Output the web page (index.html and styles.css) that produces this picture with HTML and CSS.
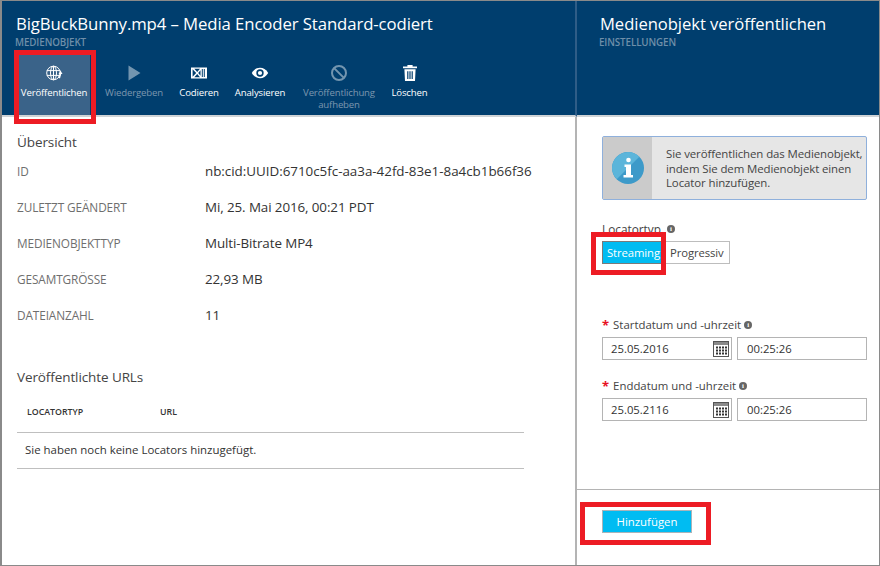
FILE: index.html
```html
<!DOCTYPE html>
<html lang="de">
<head>
<meta charset="utf-8">
<title>Medienobjekt veröffentlichen</title>
<link rel="stylesheet" href="styles.css">
</head>
<body>
<div class="frame">
  <section class="blade left">
    <header class="head left-head">
      <h1 class="title">BigBuckBunny.mp4 – Media Encoder Standard-codiert</h1>
      <div class="sub">MEDIENOBJEKT</div>
      <nav class="cmds">
        <div class="cmd active w72">
          <svg class="ico" viewBox="0 0 18 18"><g fill="none" stroke="#fff" stroke-width="1"><circle cx="8.500" cy="9" r="6.800"/><ellipse cx="8.500" cy="9" rx="3" ry="6.800"/><path d="M8.500 2.200v13.600M1.900 6.600h13.200M1.900 11.400h13.200"/></g><path d="M15.500 6.500l2 3.500h-1.300l-1.200 4.500-2-1 1.500-3.500h-1z" fill="#fff"/></svg>
          <span>Veröffentlichen</span>
        </div>
        <div class="cmd off w88">
          <svg class="ico" viewBox="0 0 18 18"><path d="M3.500 1.500L15.500 9 3.500 16.500z" fill="#fff"/></svg>
          <span>Wiedergeben</span>
        </div>
        <div class="cmd w42">
          <svg class="ico" viewBox="0 0 18 18"><path fill-rule="evenodd" fill="#fff" d="M1 3.500h16v11H1zM2.600 5.300v7.400L6.200 9zM4.300 4.700L7.200 8 10 4.700zM4.300 13.300L7.200 10 10 13.300zM8.200 9l2.300 2.700V6.300z"/><path d="M11.800 5h1v8h-1zM13.800 5h1v8h-1z" fill="#003e6e"/></svg>
          <span>Codieren</span>
        </div>
        <div class="cmd w80">
          <svg class="ico" viewBox="0 0 18 18"><path d="M.8 9C3 5.400 5.800 3.800 9 3.800s6 1.600 8.200 5.200c-2.200 3.600-5 5.200-8.200 5.200S3 12.600.8 9z" fill="#fff"/><circle cx="9" cy="9" r="3.700" fill="#003e6e"/><circle cx="9" cy="9" r="2.100" fill="#fff"/></svg>
          <span>Analysieren</span>
        </div>
        <div class="cmd off w78">
          <svg class="ico" viewBox="0 0 18 18"><g fill="none" stroke="#fff" stroke-width="2"><circle cx="9" cy="9" r="7"/><path d="M4.100 4.100l9.800 9.800"/></g></svg>
          <span>Veröffentlichung<br>aufheben</span>
        </div>
        <div class="cmd w63">
          <svg class="ico" viewBox="0 0 18 18"><path d="M6.400 1h5.200v1.400H16v1.800H2V2.400h4.400z" fill="#fff"/><path fill-rule="evenodd" d="M3.400 5.200h11.200l-.6 11.800H4zM6.200 7.200v7.800h1.200V7.200zM8.400 7.200v7.800h1.200V7.200zM10.600 7.200v7.800h1.200V7.200z" fill="#fff"/></svg>
          <span>Löschen</span>
        </div>
      </nav>
    </header>
    <main class="left-body">
      <h2 class="section">Übersicht</h2>
      <dl class="props">
        <div class="prop"><dt>ID</dt><dd class="id-val">nb:cid:UUID:6710c5fc-aa3a-42fd-83e1-8a4cb1b66f36</dd></div>
        <div class="prop"><dt>ZULETZT GEÄNDERT</dt><dd>Mi, 25. Mai 2016, 00:21 PDT</dd></div>
        <div class="prop"><dt>MEDIENOBJEKTTYP</dt><dd>Multi-Bitrate MP4</dd></div>
        <div class="prop"><dt>GESAMTGRÖSSE</dt><dd>22,93 MB</dd></div>
        <div class="prop"><dt>DATEIANZAHL</dt><dd>11</dd></div>
      </dl>
      <h2 class="section urls">Veröffentlichte URLs</h2>
      <div class="thead"><span class="th-type">LOCATORTYP</span><span>URL</span></div>
      <div class="empty">Sie haben noch keine Locators hinzugefügt.</div>
    </main>
  </section>
  <section class="blade right">
    <header class="head right-head">
      <h1 class="title small">Medienobjekt veröffentlichen</h1>
      <div class="sub">EINSTELLUNGEN</div>
    </header>
    <div class="right-body">
      <div class="info">
        <div class="info-icon">
          <svg viewBox="0 0 32 32" width="32" height="32"><circle cx="16" cy="16" r="16" fill="#3d9ac9"/><path d="M16 0a16 16 0 0 0-11.300 27.300L27.300 4.700A16 16 0 0 0 16 0z" fill="#5cb5da"/><circle cx="16.500" cy="8" r="2.300" fill="#fff"/><path d="M12.500 12.500h6.500V23h2v2.500H11.500V23h2.500v-8h-1.500z" fill="#fff"/></svg>
        </div>
        <p class="info-text">Sie veröffentlichen das Medienobjekt, indem Sie dem Medienobjekt einen Locator hinzufügen.</p>
      </div>
      <div class="label loc">Locatortyp <i class="tip">i</i></div>
      <div class="toggle"><span class="opt on">Streaming</span><span class="opt">Progressiv</span></div>
      <div class="label start"><b class="req">*</b> Startdatum und -uhrzeit <i class="tip">i</i></div>
      <div class="dt">
        <div class="field date"><span>25.05.2016</span>
          <svg class="cal" viewBox="0 0 16 16"><rect x=".5" y=".5" width="15" height="15" fill="#fff" stroke="#555"/><rect x="1" y="1" width="14" height="3" fill="#8a8a8a"/><path d="M3 5.500h2v2H3zM6 5.500h2v2H6zM9 5.500h2v2H9zM12 5.500h2v2h-2zM3 8.500h2v2H3zM6 8.500h2v2H6zM9 8.500h2v2H9zM12 8.500h2v2h-2zM3 11.500h2v2H3zM6 11.500h2v2H6zM9 11.500h2v2H9zM12 11.500h2v2h-2z" fill="#333"/></svg>
        </div>
        <div class="field time">00:25:26</div>
      </div>
      <div class="label end"><b class="req">*</b> Enddatum und -uhrzeit <i class="tip">i</i></div>
      <div class="dt">
        <div class="field date"><span>25.05.2116</span>
          <svg class="cal" viewBox="0 0 16 16"><rect x=".5" y=".5" width="15" height="15" fill="#fff" stroke="#555"/><rect x="1" y="1" width="14" height="3" fill="#8a8a8a"/><path d="M3 5.500h2v2H3zM6 5.500h2v2H6zM9 5.500h2v2H9zM12 5.500h2v2h-2zM3 8.500h2v2H3zM6 8.500h2v2H6zM9 8.500h2v2H9zM12 8.500h2v2h-2zM3 11.500h2v2H3zM6 11.500h2v2H6zM9 11.500h2v2H9zM12 11.500h2v2h-2z" fill="#333"/></svg>
        </div>
        <div class="field time">00:25:26</div>
      </div>
    </div>
    <footer class="foot"><button class="add">Hinzufügen</button></footer>
  </section>
  <div class="mark m1"></div>
  <div class="mark m2"></div>
  <div class="mark m3"></div>
</div>
</body>
</html>
```
FILE: styles.css
```css
* { box-sizing: border-box; margin: 0; padding: 0; }
html, body { width: 880px; height: 566px; overflow: hidden; background: #fff; }
body { font-family: "Open Sans", "Noto Sans", sans-serif; color: #333; }
.frame {
  position: relative; width: 880px; height: 566px; display: flex;
  border-top: 1px solid #8a8a8a; border-left: 2px solid #8a8a8a;
  border-bottom: 1px solid #8a8a8a; border-right: 1px solid #8a8a8a;
}
.blade { display: flex; flex-direction: column; height: 100%; }
.left { width: 575px; }
.right { flex: 1; }
.head { height: 116px; background: #003e6e; border-bottom: 2px solid #cfd3d6; color: #fff; flex: none; }
.left-head { padding: 11px 0 0 14px; border-right: 2px solid #2f5d87; }
.right-head { padding: 11px 0 0 22px; }
.title { font-size: 16.750px; font-weight: 400; line-height: 23px; white-space: nowrap; letter-spacing: -0.1px; }
.title.small { font-size: 16.600px; letter-spacing: -0.05px; padding-left: 1px; }
.sub { font-size: 9.800px; font-weight: 600; line-height: 12px; color: #6f8fa9; margin-top: 2px; margin-left: -1px; letter-spacing: -0.1px; }
.right-head .sub { margin-left: 0; }
.cmds { display: flex; margin-top: 2px; margin-left: 2px; height: 64px; }
.cmd { display: flex; flex-direction: column; align-items: center; font-size: 9.600px; line-height: 12px; text-align: center; padding-top: 13px; color: #fff; letter-spacing: -0.15px; font-weight: 500; flex: none; white-space: nowrap; }
.cmd .ico { width: 18px; height: 18px; margin-bottom: 5px; display: block; flex: none; }
.cmd.active { background: #3a6389; }
.cmd.off { color: #7c97ae; }
.cmd.off .ico { opacity: .45; }
.w72 { width: 72px; }
.w88 { width: 88px; }
.w42 { width: 42px; }
.w80 { width: 80px; }
.w78 { width: 78px; }
.w63 { width: 63px; }
.left-body { flex: 1; padding: 16px 0 0 15px; border-right: 2px solid #b4b4b4; }
.section { font-size: 13.500px; font-weight: 400; line-height: 18px; color: #444; letter-spacing: -0.1px; }
.props { margin-top: 12px; }
.prop { display: flex; height: 36px; line-height: 16px; }
.prop dt { width: 188px; font-size: 11.800px; color: #6e6e6e; flex: none; letter-spacing: -0.1px; }
.prop dd { font-size: 13.400px; color: #333; letter-spacing: -0.1px; white-space: nowrap; }
.prop .id-val { letter-spacing: -0.02px; }
.urls { margin-top: 25px; }
.thead { display: flex; margin-top: 20px; padding: 0 0 14px 10px; font-size: 8.800px; font-weight: 600; line-height: 12px; color: #333; border-bottom: 1px solid #bfbfbf; width: 507px; }
.th-type { width: 133px; }
.empty { width: 507px; height: 36px; padding: 9px 0 0 8px; font-size: 11.450px; line-height: 16px; color: #333; border-bottom: 1px solid #bfbfbf; }
.right-body { flex: 1; padding: 19px 0 0 25px; }
.info { display: flex; width: 265px; height: 64px; background: #e6e6e6; border: 1px solid #8fb0dc; border-radius: 2px; }
.info-icon { width: 49px; background: #cbcbcb; display: flex; align-items: center; justify-content: center; flex: none; }
.info-text { padding: 10px 0 0 14px; font-size: 11.450px; line-height: 14.500px; color: #444; letter-spacing: -0.1px; flex: 1; min-width: 0; }
.label { font-size: 11.400px; line-height: 14px; color: #444; display: flex; align-items: center; gap: 3px; white-space: nowrap; }
.loc { margin-top: 22px; gap: 6px; font-size: 11.800px; }
.tip { display: inline-flex; width: 8px; height: 8px; border-radius: 50%; background: #666; color: #fff; font-style: normal; font-size: 7px; line-height: 8px; font-weight: 700; align-items: center; justify-content: center; font-family: "Liberation Serif", serif; }
.toggle { display: flex; margin-top: 5px; height: 23px; }
.opt { border: 1px solid #bdbdbd; font-size: 11.300px; line-height: 21px; width: 68px; padding-left: 7px; color: #444; letter-spacing: -0.1px; }
.opt.on { width: 60px; padding-left: 4px; background: #00bcf2; color: #fff; border: 1px solid #7a7a7a; border-right: 0; }
.start { margin-top: 54px; }
.end { margin-top: 19px; }
.req { color: #e81123; font-size: 13px; font-weight: 700; line-height: 14px; margin-right: 1px; }
.dt { display: flex; gap: 5px; margin-top: 5px; }
.field { height: 23px; border: 1px solid #b4b4b4; font-size: 11.300px; line-height: 21px; color: #333; background: #fff; }
.date { width: 130px; padding: 0 2px 0 8px; display: flex; align-items: center; justify-content: space-between; }
.time { width: 130px; padding-left: 9px; }
.cal { width: 16px; height: 16px; flex: none; }
.foot { height: 76px; flex: none; border-top: 1px solid #b4b4b4; padding: 20px 0 0 25px; }
.add { display: block; width: 90px; height: 23px; background: #00bcf2; border: 1px solid #a9b4ba; color: #fff; font: 500 11.400px "Open Sans", sans-serif; }
.mark { position: absolute; border: 5px solid #ed1c24; }
.m1 { left: 12px; top: 49px; width: 82px; height: 74px; }
.m2 { left: 589px; top: 231px; width: 75px; height: 43px; }
.m3 { left: 578px; top: 501px; width: 131px; height: 43px; }
```
